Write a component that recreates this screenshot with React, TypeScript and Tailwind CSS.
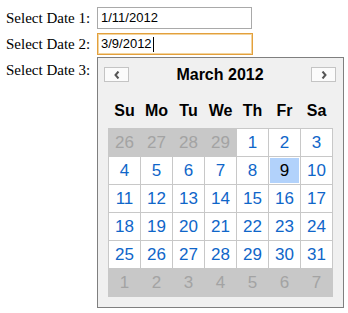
const WEEKDAYS = ['Su', 'Mo', 'Tu', 'We', 'Th', 'Fr', 'Sa'];

type Day = { n: number; other: boolean };

function buildDays(): Day[] {
  const days: Day[] = [];
  [26, 27, 28, 29].forEach(n => days.push({ n, other: true }));
  for (let n = 1; n <= 31; n++) days.push({ n, other: false });
  for (let n = 1; n <= 7; n++) days.push({ n, other: true });
  return days;
}

function Chevron({ dir }: { dir: 'left' | 'right' }) {
  return (
    <svg width="6" height="8" viewBox="0 0 6 8">
      <polyline
        points={dir === 'left' ? '4.5,0.5 1.5,4 4.5,7.5' : '1.5,0.5 4.5,4 1.5,7.5'}
        fill="none"
        stroke="#555"
        strokeWidth="2"
      />
    </svg>
  );
}

function Calendar() {
  const days = buildDays();
  return (
    <div className="absolute left-[97px] top-[57px] w-[247px] h-[251px] border border-[#7f7f7f] bg-[#f0f0f0] font-['Liberation_Sans',Arial,sans-serif]">
      <div className="h-[24px] flex items-start pt-[9px]">
        <button className="ml-[6px] w-[25px] h-[15px] bg-[#fbfbfb] border border-[#c4c4c4] flex items-center justify-center">
          <Chevron dir="left" />
        </button>
        <div className="flex-1 text-center text-[16px] leading-[15px] font-bold text-black">March 2012</div>
        <button className="mr-[7px] w-[25px] h-[15px] bg-[#fbfbfb] border border-[#c4c4c4] flex items-center justify-center">
          <Chevron dir="right" />
        </button>
      </div>
      <div className="mt-[15px] ml-[10px] h-[28px] grid grid-cols-[repeat(7,32px)] items-center">
        {WEEKDAYS.map(w => (
          <div key={w} className="text-center text-[16px] font-bold text-black pl-px">{w}</div>
        ))}
      </div>
      <div className="mt-[3px] ml-[10px] w-fit grid grid-cols-[repeat(7,31px)] auto-rows-[27px] gap-px p-px bg-[#c8c8c8]">
        {days.map((d, i) => {
          const selected = !d.other && d.n === 9;
          if (d.other) {
            return (
              <div key={i} className="flex items-center justify-center text-[17px] text-[#a3a3a3] bg-[#c8c8c8]">
                {d.n}
              </div>
            );
          }
          return (
            <div key={i} className="bg-white p-px flex">
              <div
                className={
                  selected
                    ? 'flex-1 flex items-center justify-center text-[17px] text-black bg-[#b2d2fb]'
                    : 'flex-1 flex items-center justify-center text-[17px] text-[#0f66c9]'
                }
              >
                {d.n}
              </div>
            </div>
          );
        })}
      </div>
    </div>
  );
}

function Row({ label, value, focused }: { label: string; value: string; focused?: boolean }) {
  return (
    <div className="h-[22px] flex items-center">
      <div className="w-[97px] pl-[6px] font-['Liberation_Serif','Times_New_Roman',serif] text-[15px] text-black whitespace-nowrap">
        {label}
      </div>
      <div
        className={
          focused
            ? 'w-[156px] h-[22px] border border-[#e3a03c] shadow-[inset_0_0_0_1px_#f3d49e] bg-white flex items-center pl-[3px] text-[13px] text-black font-[\'Liberation_Sans\',Arial,sans-serif]'
            : 'w-[155px] h-[22px] border border-[#a9a9a9] bg-white flex items-center pl-[3px] text-[13px] text-black font-[\'Liberation_Sans\',Arial,sans-serif]'
        }
      >
        <span>{value}</span>
        {focused && <span className="ml-px w-px h-[15px] bg-black" />}
      </div>
    </div>
  );
}

export default function App() {
  return (
    <div className="relative w-[348px] h-[313px] bg-white overflow-hidden">
      <div className="pt-[7px] flex flex-col gap-[4px]">
        <Row label="Select Date 1:" value="1/11/2012" />
        <Row label="Select Date 2:" value="3/9/2012" focused />
        <Row label="Select Date 3:" value="" />
      </div>
      <Calendar />
    </div>
  );
}
